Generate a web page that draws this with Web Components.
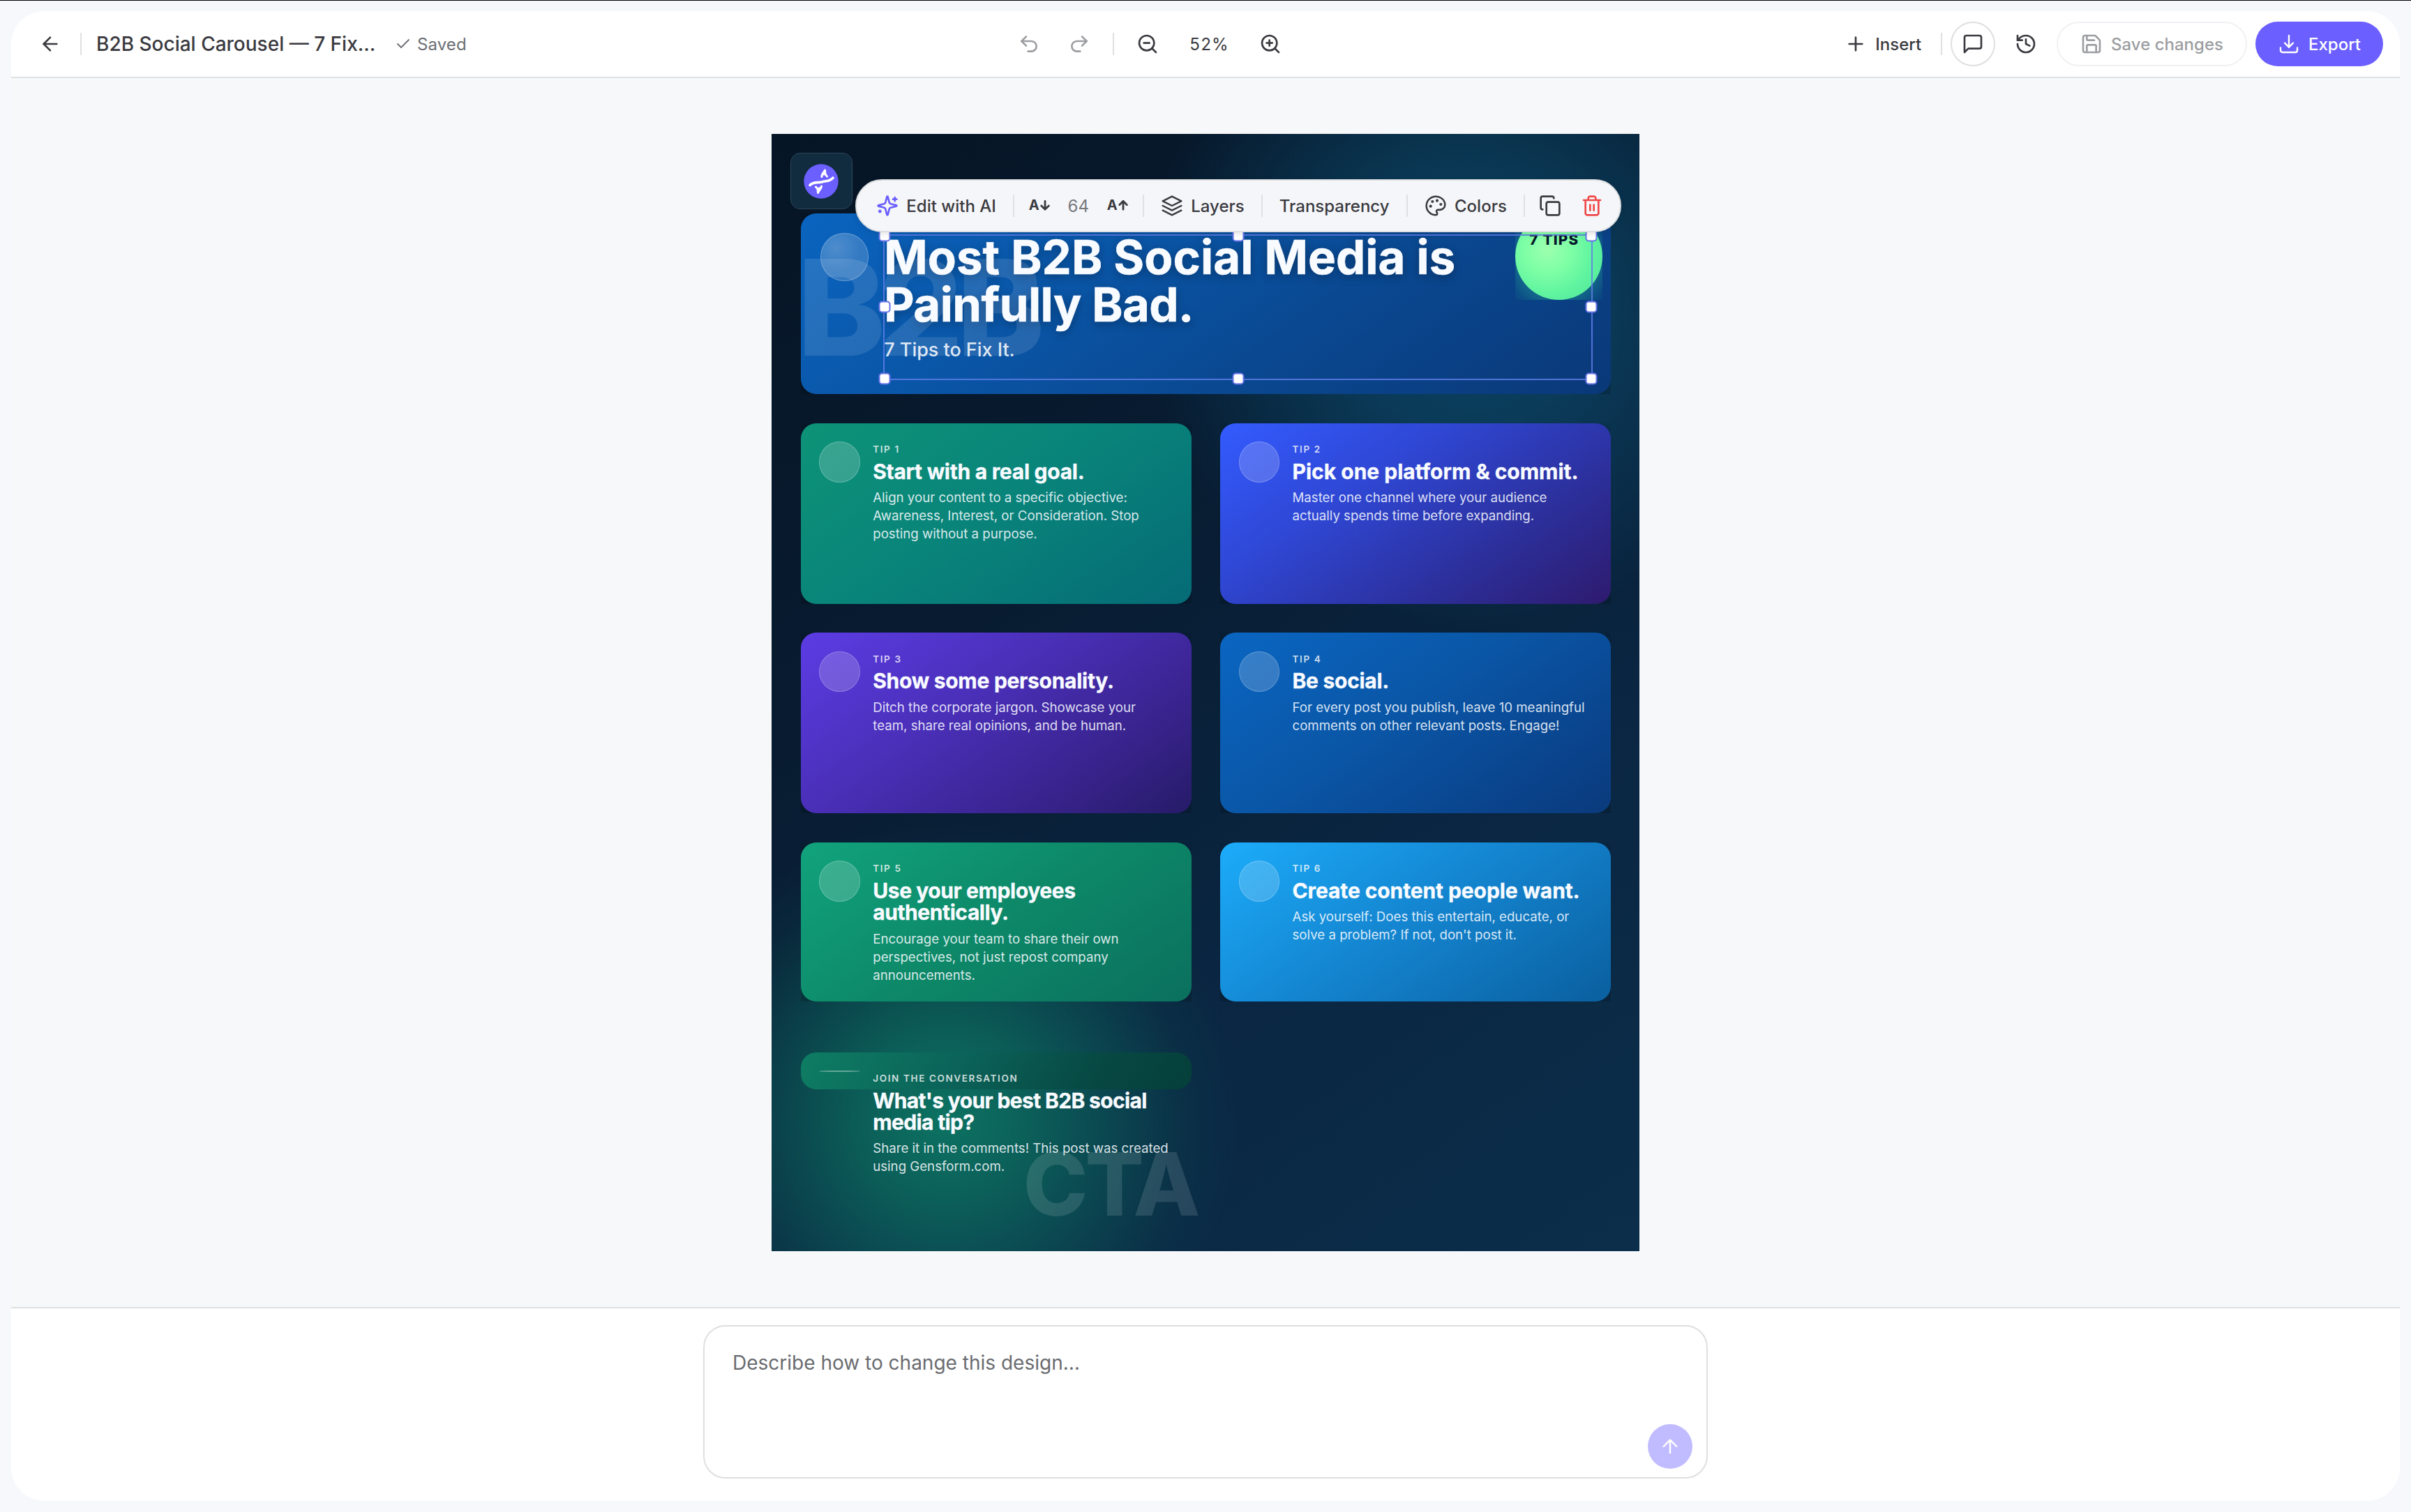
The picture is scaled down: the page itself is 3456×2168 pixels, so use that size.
<!DOCTYPE html>
<html lang="en">
<head>
<meta charset="utf-8">
<title>B2B Social Carousel</title>
<style>
html,body{margin:0;padding:0}
body{width:3456px;height:2168px;overflow:hidden;background:#f7f8fc;font-family:Inter,"Liberation Sans",sans-serif;color:#3a3a40}
</style>
</head>
<body>
<design-editor></design-editor>
<script>
const ICONS={
 back:'<path d="m12 19-7-7 7-7"/><path d="M19 12H5"/>',
 check:'<path d="M20 6 9 17l-5-5"/>',
 undo:'<path d="M9 14 4 9l5-5"/><path d="M4 9h10.5a5.5 5.5 0 0 1 0 11H11"/>',
 redo:'<path d="m15 14 5-5-5-5"/><path d="M20 9H9.500a5.500 5.500 0 0 0 0 11H13"/>',
 zoomout:'<circle cx="11" cy="11" r="8"/><path d="m21 21-4.350-4.350M8 11h6"/>',
 zoomin:'<circle cx="11" cy="11" r="8"/><path d="m21 21-4.350-4.350M11 8v6M8 11h6"/>',
 plus:'<path d="M5 12h14M12 5v14"/>',
 comment:'<path d="M21 15a2 2 0 0 1-2 2H7l-4 4V5a2 2 0 0 1 2-2h14a2 2 0 0 1 2 2z"/>',
 history:'<path d="M3 12a9 9 0 1 0 9-9 9.750 9.750 0 0 0-6.740 2.740L3 8"/><path d="M3 3v5h5"/><path d="M12 7v5l4 2"/>',
 save:'<path d="M15.200 3a2 2 0 0 1 1.400.600l3.800 3.800a2 2 0 0 1 .600 1.400V19a2 2 0 0 1-2 2H5a2 2 0 0 1-2-2V5a2 2 0 0 1 2-2z"/><path d="M17 21v-7a1 1 0 0 0-1-1H8a1 1 0 0 0-1 1v7"/><path d="M7 3v4a1 1 0 0 0 1 1h7"/>',
 export:'<path d="M12 15.500V3"/><path d="M21 16v3a2 2 0 0 1-2 2H5a2 2 0 0 1-2-2v-3"/><path d="m7.500 11 4.500 4.500 4.500-4.500"/>',
 sparkles:'<path d="M9.937 15.500A2 2 0 0 0 8.500 14.063l-6.135-1.582a.5.5 0 0 1 0-.962L8.500 9.936A2 2 0 0 0 9.937 8.500l1.582-6.135a.5.5 0 0 1 .963 0L14.063 8.500A2 2 0 0 0 15.500 9.937l6.135 1.581a.5.5 0 0 1 0 .964L15.500 14.063a2 2 0 0 0-1.437 1.437l-1.582 6.135a.5.5 0 0 1-.963 0z"/><path d="M20 3v4M22 5h-4M4 17v2M5 18H3"/>',
 layers:'<path d="M12 2 2 7l10 5 10-5z"/><path d="m2 17 10 5 10-5"/><path d="m2 12 10 5 10-5"/>',
 palette:'<g fill="currentColor"><circle cx="13.500" cy="6.500" r=".6"/><circle cx="17.500" cy="10.500" r=".6"/><circle cx="8.500" cy="7.500" r=".6"/><circle cx="6.500" cy="12.500" r=".6"/></g><path d="M12 2C6.500 2 2 6.500 2 12s4.500 10 10 10c.926 0 1.648-.746 1.648-1.688 0-.437-.18-.835-.437-1.125-.29-.289-.438-.652-.438-1.125a1.640 1.640 0 0 1 1.668-1.668h1.996c3.051 0 5.555-2.503 5.555-5.554C21.965 6.012 17.461 2 12 2z"/>',
 copy:'<rect x="8" y="8" width="14" height="14" rx="2"/><path d="M4 16c-1.100 0-2-.9-2-2V4c0-1.100.9-2 2-2h10c1.100 0 2 .9 2 2"/>',
 trash:'<path d="M3 6h18M19 6v14c0 1-1 2-2 2H7c-1 0-2-1-2-2V6M8 6V4c0-1 1-2 2-2h4c1 0 2 1 2 2v2M10 11v6M14 11v6"/>',
 arrowup:'<path d="m5 12 7-7 7 7M12 19V5"/>',
 down:'<path d="m14 12 4 4 4-4M18 16V7"/>',
 up:'<path d="m14 11 4-4 4 4M18 16V7"/>'
};
function define(name,html){
  customElements.define(name,class extends HTMLElement{
    constructor(){
      super();
      const t=document.createElement('template');
      t.innerHTML=typeof html==='function'?html(this):html;
      this.attachShadow({mode:'open'}).append(t.content.cloneNode(true));
    }
  });
}
define('ui-icon',el=>`<style>:host{display:block;flex:none;width:var(--size,32px);height:var(--size,32px)}svg{display:block;width:100%;height:100%}</style>
<svg viewBox="0 0 24 24" fill="none" stroke="currentColor" stroke-width="${el.getAttribute('weight')||2}" stroke-linecap="round" stroke-linejoin="round">${ICONS[el.getAttribute('name')]}</svg>`);
define('ui-sep',`<style>:host{display:block;flex:none;width:2px;height:32px;background:#dfe0e2}</style>`);
define('type-step',el=>`<style>:host{display:flex;position:relative;width:32px;height:32px;flex:none}
span{font-size:20px;font-weight:650;line-height:31px;margin-left:1px}ui-icon{position:absolute;inset:0}</style>
<span>A</span><ui-icon name="${el.getAttribute('dir')}" weight="2.100"></ui-icon>`);
define('ui-button',`<style>
:host{display:flex;align-items:center;box-sizing:border-box;height:64px;gap:12px;font-size:24px;font-weight:500;white-space:nowrap;flex:none}
:host([kind=icon]){width:64px;justify-content:center}
:host([kind=ring]){width:64px;justify-content:center;border:2px solid #dedfe1;border-radius:32px}
:host([kind=muted]){border:2px solid #f0f1f4;border-radius:32px;padding:0 32px;color:#9c9ea2}
:host([kind=primary]){background:#6b5fff;color:#fff;border-radius:32px;padding:0 32px}
</style><slot></slot>`);
define('top-bar',`<style>
:host{display:flex;box-sizing:border-box;height:96px;border-bottom:2px solid #dedfe1;background:#fff;padding:0 24px 0 40px;align-items:center}
.left{display:flex;align-items:center;width:1387px}
.left ui-sep{margin:0 21px 0 27px}
.name{font-size:28px;font-weight:500;width:400px;white-space:nowrap}
.saved{display:flex;align-items:center;gap:8px;margin-left:28px;font-size:24px;color:#6c6e72;letter-spacing:.1px;--size:24px}
.mid{display:flex;align-items:center;gap:8px}
.mid ui-sep{margin:0 8px}
.dim{color:#9c9ea2}
.pct{width:96px;text-align:center;font-size:24px;font-variant-numeric:tabular-nums;letter-spacing:.4px}
.right{display:flex;align-items:center;gap:12px;margin-left:auto}
</style>
<div class="left"><ui-icon name="back"></ui-icon><ui-sep></ui-sep><div class="name">B2B Social Carousel — 7 Fix…</div><div class="saved"><ui-icon name="check" weight="1.800"></ui-icon>Saved</div></div>
<div class="mid"><ui-button kind="icon" class="dim"><ui-icon name="undo"></ui-icon></ui-button><ui-button kind="icon" class="dim"><ui-icon name="redo"></ui-icon></ui-button><ui-sep></ui-sep><ui-button kind="icon"><ui-icon name="zoomout"></ui-icon></ui-button><div class="pct">52%</div><ui-button kind="icon"><ui-icon name="zoomin"></ui-icon></ui-button></div>
<div class="right"><ui-button><ui-icon name="plus"></ui-icon>Insert</ui-button><ui-sep style="margin-left:16px"></ui-sep><ui-button kind="ring"><ui-icon name="comment"></ui-icon></ui-button><ui-button kind="icon"><ui-icon name="history"></ui-icon></ui-button><ui-button kind="muted"><ui-icon name="save"></ui-icon>Save changes</ui-button><ui-button kind="primary"><ui-icon name="export" weight="1.800"></ui-icon>Export</ui-button></div>`);
define('tip-card',el=>`<style>
:host{display:block;width:559.800px;height:258.800px;overflow:hidden;flex:none}
:host([short]){height:227.700px}
:host([strip]){height:53.400px;overflow:visible;position:relative}
.card{box-sizing:border-box;height:100%;border-radius:22px;padding:26.400px;display:flex;gap:18.600px;align-items:flex-start;background:var(--fill);box-shadow:0 18px 48px rgba(0,0,0,.35)}
:host([strip]) .card{box-shadow:none}
.dot{box-sizing:border-box;width:58.400px;height:58.400px;border-radius:50%;background:rgba(255,255,255,.18);border:1px solid rgba(255,255,255,.22);flex:none}
:host([strip]) .dot{height:2px}
.kick{font-size:13.500px;font-weight:600;letter-spacing:1.620px;line-height:22.400px;color:rgba(255,255,255,.8)}
.head{font-size:30px;font-weight:700;line-height:31.300px;margin-top:5.200px;letter-spacing:var(--track,-.28px);color:#f8fbff;-webkit-text-stroke:.3px #f8fbff}
.text{font-size:18.660px;line-height:26.100px;margin-top:8.900px;color:rgba(248,251,255,.87)}
.copy{white-space:nowrap}
.mark{position:absolute;left:319px;top:114px;font-size:124.600px;line-height:150px;font-weight:800;letter-spacing:-4px;color:rgba(255,255,255,.12);pointer-events:none}
</style>
<div class="card"><div class="dot"></div><div class="copy"><div class="kick">${el.getAttribute('kick')}</div><div class="head"><slot name="head"></slot></div><div class="text"><slot></slot></div></div></div>${el.hasAttribute('strip')?'<div class="mark">CTA</div>':''}`);
define('hero-card',`<style>
:host{display:block;position:relative;height:259px;overflow:hidden;flex:none}
.card{box-sizing:border-box;height:100%;border-radius:22px;padding:28.400px;display:flex;gap:22.600px;background:linear-gradient(145deg,#0a64bf 0%,#0a55a6 35%,#0a478f 65%,#0a3878 100%);box-shadow:0 18px 48px rgba(0,0,0,.35)}
.orb{box-sizing:border-box;width:68.400px;height:68.400px;border-radius:50%;background:radial-gradient(circle at 32% 30%,rgba(255,255,255,.28),rgba(255,255,255,.17) 55%);border:1px solid rgba(255,255,255,.25);flex:none}
.mark{position:absolute;left:-5px;top:20px;font-size:190.500px;line-height:230px;font-weight:800;letter-spacing:-10px;color:rgba(255,255,255,.115)}
.copy{position:relative;white-space:nowrap}
.title{font-size:67px;line-height:68.300px;font-weight:700;letter-spacing:.1px;margin-top:.8px;color:#f8fbff;text-shadow:0 4px 14px rgba(0,0,0,.3);-webkit-text-stroke:.6px #f8fbff}
.two{letter-spacing:-.5px}
.sub{font-size:26.950px;font-weight:500;line-height:36px;margin-top:12px;color:rgba(248,251,255,.9)}
.badge{position:absolute;left:1024.500px;top:-1px;width:125px;height:124.500px;overflow:hidden}
.badge:before{content:"";position:absolute;inset:0;border-radius:50%;background:radial-gradient(circle at 37% 42%,#9dffae 0,#7fffa6 30%,#62f5a0 58%,#48e39a 100%);box-shadow:0 8px 26px 6px rgba(40,190,150,.38)}
.badge span{position:absolute;left:0;right:14px;text-align:center;top:26px;font-size:20.700px;line-height:26px;font-weight:800;letter-spacing:1.250px;color:#06182a;white-space:nowrap}
</style>
<div class="card"><div class="orb"></div><div class="copy"><div class="title">Most B2B Social Media is<br><span class="two">Painfully Bad.</span></div><div class="sub">7 Tips to Fix It.</div></div></div><div class="mark">B2B</div><div class="badge"><span>7 TIPS</span></div>`);
define('selection-frame',`<style>
:host{display:grid;position:absolute;left:160.500px;top:143.500px;width:1017px;height:209px;box-sizing:border-box;border:2px solid rgba(94,124,232,.85)}
i{position:absolute;box-sizing:border-box;width:17px;height:17px;border:2px solid #6673e8;border-radius:5px;background:#fff;transform:translate(-50%,-50%)}
</style>${[[0,0],[50,0],[100,0],[0,50],[100,50],[0,100],[50,100],[100,100]].map(p=>`<i style="left:${p[0]}%;top:${p[1]}%"></i>`).join('')}`);
define('float-bar',`<style>
:host{display:flex;position:absolute;left:120px;top:65px;width:1098px;height:76px;box-sizing:border-box;align-items:center;border:2px solid #dedfe1;border-radius:38px;background:#f5f6f9;padding-left:4px;font-size:24px;font-weight:500;box-shadow:0 2px 8px rgba(0,0,0,.12)}
.seg{display:flex;align-items:center;gap:11.500px;padding:0 24px;white-space:nowrap}
.size{display:flex;align-items:center;justify-content:space-between;width:184px;box-sizing:border-box;padding:0 20px}
.num{font-weight:400;color:#77797d}
.end{display:flex;gap:28px;padding-left:20.500px}
</style>
<div class="seg"><ui-icon name="sparkles" style="color:#6b5fff"></ui-icon>Edit with AI</div><ui-sep></ui-sep>
<div class="size"><type-step dir="down"></type-step><span class="num">64</span><type-step dir="up"></type-step></div><ui-sep></ui-sep>
<div class="seg"><ui-icon name="layers" weight="1.800"></ui-icon>Layers</div><ui-sep></ui-sep>
<div class="seg">Transparency</div><ui-sep></ui-sep>
<div class="seg"><ui-icon name="palette" weight="1.900"></ui-icon>Colors</div><ui-sep></ui-sep>
<div class="end"><ui-icon name="copy"></ui-icon><ui-icon name="trash" style="color:#ef4848"></ui-icon></div>`);
define('brand-tile',`<style>
:host{display:flex;align-items:center;justify-content:center;box-sizing:border-box;width:89px;height:81px;margin-left:-15px;border-radius:14px;background:#112b3f;border:1px solid #2b4558;flex:none}
svg{width:50px;height:50px;display:block}
</style><svg viewBox="0 0 50 50" fill="none" stroke="#fff" stroke-width="3" stroke-linecap="round" stroke-linejoin="round"><circle cx="25" cy="25" r="24.700" fill="#6b5fff" stroke="none"/><path stroke-width="3.600" d="M9 30.500C14 25 20 27.500 26 26C33 24 37 25.500 42 20"/><path d="M26 18.500C25.500 14 28.500 13 30.500 9L31 14.500L33.500 18M27.500 15L31 14.500M25.500 32C25.500 36 22 37 20.500 41.500L20 36L17.500 33M20 36L24 34.500"/></svg>`);
define('art-board',`<style>
:host{display:flex;flex-direction:column;position:relative;box-sizing:border-box;width:1244.300px;height:1602px;padding:27px 40.800px 0 42px;
background:radial-gradient(circle at 20% 88%,rgba(13,148,112,.7) 0,rgba(13,140,108,.58) 110px,rgba(12,130,105,.36) 230px,rgba(12,120,100,.1) 345px,rgba(12,120,100,0) 420px),radial-gradient(circle at 80% 15%,rgba(12,92,130,.6) 0,rgba(12,88,125,.5) 180px,rgba(12,84,120,0) 470px),linear-gradient(145deg,#061525 0%,#081b30 35%,#0a2642 68%,#0b2e4a 100%)}
hero-card{margin-top:6px}
.grid{display:grid;grid-template-columns:559.800px 559.800px;column-gap:41.500px;grid-template-rows:repeat(4,258.900px);row-gap:41.700px;margin-top:41.900px}
</style>
<brand-tile></brand-tile>
<hero-card></hero-card>
<div class="grid">
<tip-card kick="TIP 1" style="--fill:linear-gradient(145deg,#0d9377 0%,#09837a 50%,#056b76 100%)"><span slot="head">Start with a real goal.</span>Align your content to a specific objective:<br>Awareness, Interest, or Consideration. Stop<br>posting without a purpose.</tip-card>
<tip-card kick="TIP 2" style="--track:0px;--fill:linear-gradient(145deg,#335bff 0%,#2f47d4 35%,#2c2e98 72%,#2e1a6e 100%)"><span slot="head">Pick one platform &amp; commit.</span>Master one channel where your audience<br>actually spends time before expanding.</tip-card>
<tip-card kick="TIP 3" style="--fill:linear-gradient(145deg,#5c3ce4 0%,#4a2fb8 40%,#38238c 75%,#261b68 100%)"><span slot="head">Show some personality.</span>Ditch the corporate jargon. Showcase your<br>team, share real opinions, and be human.</tip-card>
<tip-card kick="TIP 4" style="--fill:linear-gradient(145deg,#0a66c2 0%,#0a56a6 45%,#0a4690 75%,#0a3a7c 100%)"><span slot="head">Be social.</span>For every post you publish, leave 10 meaningful<br>comments on other relevant posts. Engage!</tip-card>
<tip-card short kick="TIP 5" style="--track:-.42px;--fill:linear-gradient(145deg,#11a37c 0%,#0d8868 50%,#0b705e 100%)"><span slot="head">Use your employees<br>authentically.</span>Encourage your team to share their own<br>perspectives, not just repost company<br>announcements.</tip-card>
<tip-card short kick="TIP 6" style="--track:-.1px;--fill:linear-gradient(145deg,#1cacfa 0%,#1485d0 48%,#0a5f9f 100%)"><span slot="head">Create content people want.</span>Ask yourself: Does this entertain, educate, or<br>solve a problem? If not, don't post it.</tip-card>
<tip-card strip kick="JOIN THE CONVERSATION" style="--track:-.64px;--fill:linear-gradient(120deg,#0e7d63 0%,#0b6359 40%,#074843 75%,#053f3a 100%)"><span slot="head">What's your best B2B social<br>media tip?</span>Share it in the comments! This post was created<br>using Gensform.com.</tip-card>
</div>
<selection-frame></selection-frame>
<float-bar></float-bar>`);
define('prompt-bar',`<style>
:host{display:flex;justify-content:center;box-sizing:border-box;height:278px;border-top:2px solid #dedfe1;background:#fff;padding-top:24px}
.box{display:flex;flex-direction:column;justify-content:space-between;box-sizing:border-box;width:1440px;height:220px;border:2px solid #dedfe1;border-radius:32px;padding:34px 20px 12px 40px;font-size:28px;line-height:36px;color:#6a6c70}
.send{display:flex;align-items:center;justify-content:center;align-self:flex-end;width:64px;height:64px;border-radius:50%;background:#c1bcff;color:#fff}
</style><div class="box"><div>Describe how to change this design…</div><div class="send"><ui-icon name="arrowup" weight="1.800"></ui-icon></div></div>`);
define('design-editor',`<style>
:host{display:flex;box-sizing:border-box;height:2168px;padding:15px 16px 16px;border-top:1px solid #000}
.shell{flex:1;display:flex;flex-direction:column;border-radius:48px;overflow:hidden;background:#fff}
.stage{flex:1;display:flex;justify-content:center;align-items:flex-start;padding-top:80px;box-sizing:border-box;background:#f7f8fa}
</style><div class="shell"><top-bar></top-bar><div class="stage"><art-board></art-board></div><prompt-bar></prompt-bar></div>`);
</script>
</body>
</html>
